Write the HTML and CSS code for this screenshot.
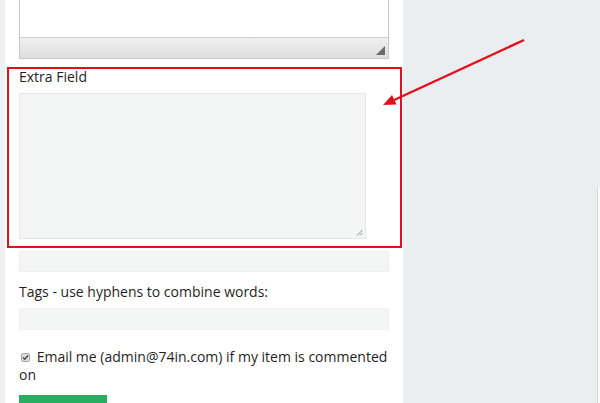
FILE: index.html
```html
<!DOCTYPE html>
<html>
<head>
<meta charset="utf-8">
<link rel="stylesheet" href="styles.css">
</head>
<body>
<div class="page">
  <div class="gutter"></div>
  <div class="panel">
    <div class="editor">
      <div class="editor-body"></div>
      <div class="editor-bar">
        <svg class="tri" width="9" height="9" viewBox="0 0 9 9"><polygon points="9,0 9,9 0,9" fill="#6b6b6b"/></svg>
      </div>
    </div>
    <div class="field-label">Extra Field</div>
    <div class="textarea">
      <svg class="grip" width="7" height="7" viewBox="0 0 7 7"><path d="M6.5 1 L1 6.5 M6.5 4 L4 6.5" stroke="#8a8a8a" stroke-width="1" fill="none"/></svg>
    </div>
    <div class="input first"></div>
    <div class="field-label tags">Tags - use hyphens to combine words:</div>
    <div class="input"></div>
    <div class="check-row">
      <svg class="checkbox" width="9" height="9" viewBox="0 0 9 9"><rect x="0.5" y="0.5" width="8" height="8" rx="1.5" fill="#dcdcdc" stroke="#a8a8a8"/><path d="M2 4.6 L3.8 6.3 L7 2.5" stroke="#4a4a4a" stroke-width="1.4" fill="none"/></svg>
      Email me (admin@74in.com) if my item is commented on
    </div>
    <div class="button"></div>
  </div>
  <div class="side">
    <div class="strip"></div>
  </div>
  <div class="highlight"></div>
  <svg class="arrow" width="600" height="403" viewBox="0 0 600 403">
    <line x1="524" y1="40" x2="392" y2="101" stroke="#e3101a" stroke-width="2.4"/>
    <polygon points="383,105 392,95 396.5,104.5" fill="#e3101a"/>
  </svg>
</div>
</body>
</html>
```

FILE: styles.css
```css
html, body {
  margin: 0;
  padding: 0;
}
body {
  background: #eceff1;
  font-family: "Open Sans", "Noto Sans", sans-serif;
  color: #1f1f1f;
  overflow: hidden;
}
.page {
  position: relative;
  display: flex;
  width: 600px;
  height: 403px;
  overflow: hidden;
}
.gutter {
  width: 5px;
  flex: none;
  background: #eef1f2;
}
.panel {
  width: 370px;
  flex: none;
  background: #fff;
  padding: 0 14px;
}
.editor {
  border: 1px solid #c9c9c9;
  border-top: none;
  height: 58px;
  display: flex;
  flex-direction: column;
}
.editor-body {
  flex: 1;
  background: #fff;
}
.editor-bar {
  height: 17px;
  border-top: 1px solid #cfcfcf;
  background: linear-gradient(#f0f0f0, #dedede);
  display: flex;
  justify-content: flex-end;
  align-items: flex-end;
  padding: 0 3px 3px 0;
}
.field-label {
  font-size: 14px;
  line-height: 20px;
  margin-top: 8px;
}
.textarea {
  margin-top: 6px;
  width: 345px;
  height: 144px;
  background: #f4f5f5;
  border: 1px solid #e6e8e8;
  display: flex;
  justify-content: flex-end;
  align-items: flex-end;
}
.grip {
  margin: 0 2px 2px 0;
}
.input {
  margin-top: 6px;
  height: 22px;
  background: #f4f5f5;
  border: 1px solid #eef0f0;
  box-sizing: border-box;
}
.input.first {
  margin-top: 12px;
  height: 21px;
}
.field-label.tags {
  margin-top: 10px;
}
.check-row {
  margin-top: 18px;
  font-size: 14px;
  line-height: 18px;
}
.checkbox {
  margin: 0 3px 0 2px;
  vertical-align: 0;
}
.button {
  margin-top: 11px;
  width: 88px;
  height: 30px;
  background: #27ae60;
}
.side {
  flex: 1;
  display: flex;
  justify-content: flex-end;
  background: #ebeef0;
}
.strip {
  width: 2px;
  margin-top: 187px;
  background: #fafafa;
  border-left: 1px solid #d6d9db;
}
.highlight {
  position: absolute;
  left: 7px;
  top: 67px;
  width: 391px;
  height: 177px;
  border: 2.5px solid #e3101a;
}
.arrow {
  position: absolute;
  left: 0;
  top: 0;
}
```
